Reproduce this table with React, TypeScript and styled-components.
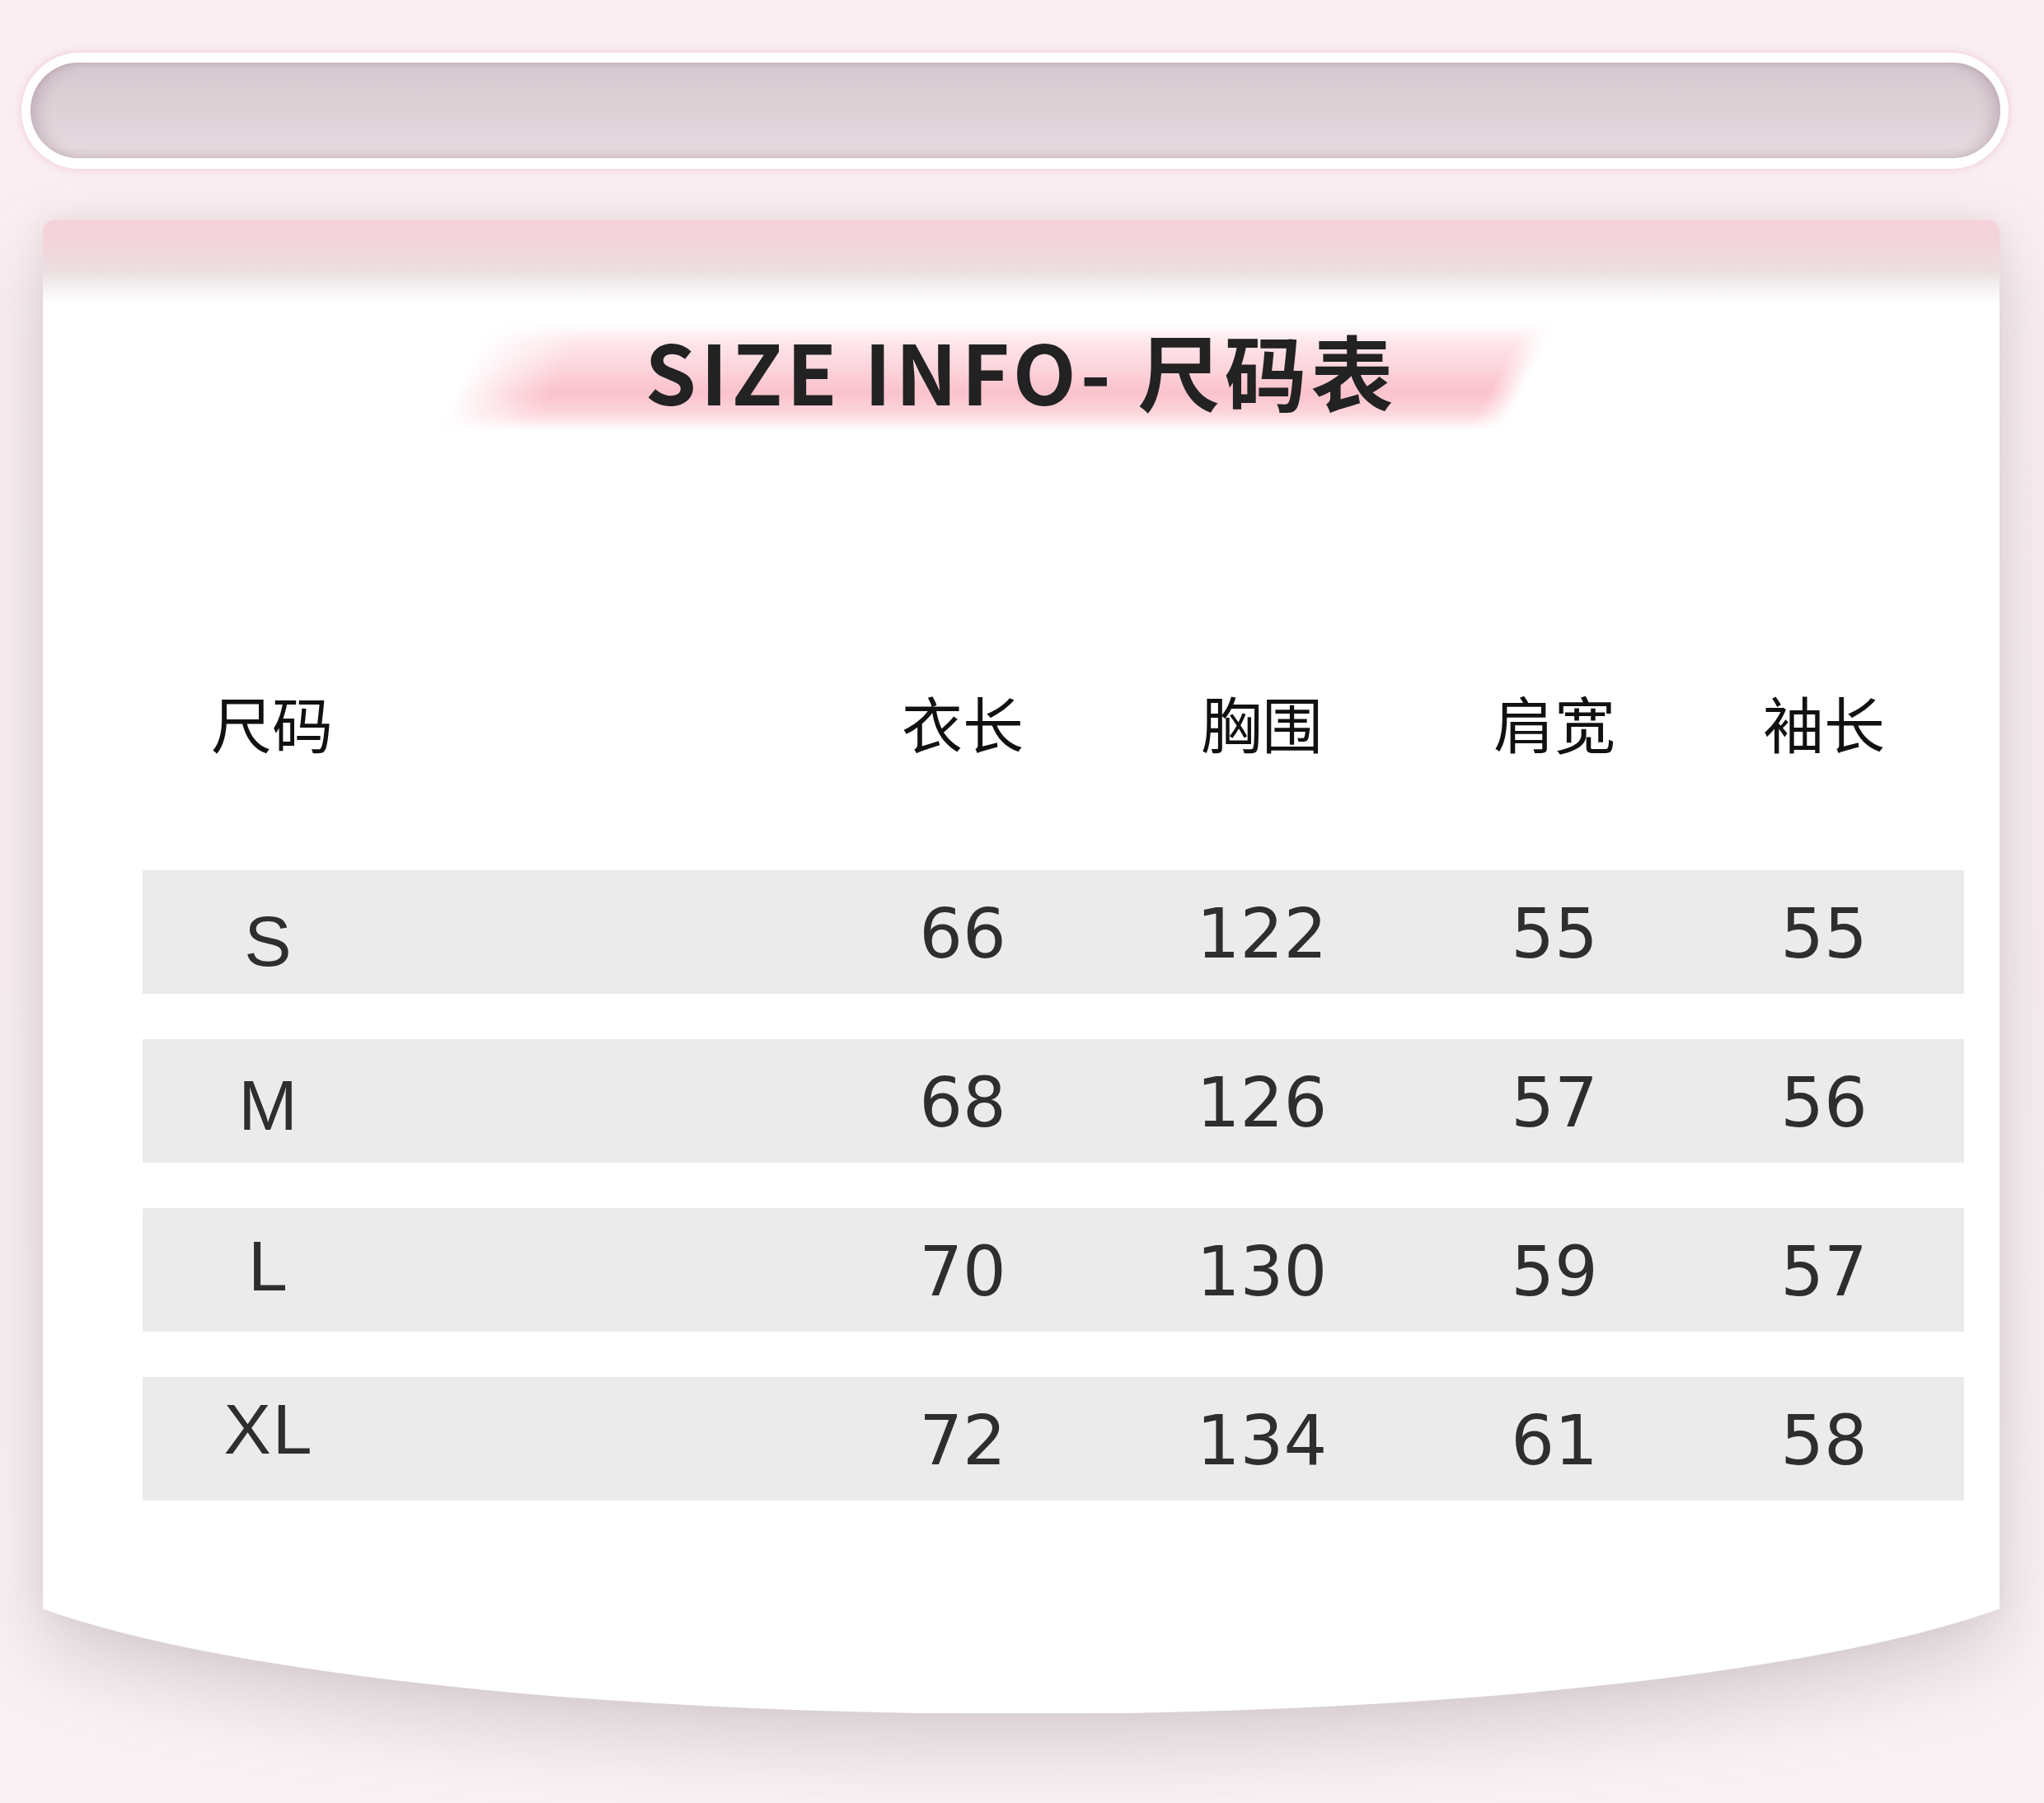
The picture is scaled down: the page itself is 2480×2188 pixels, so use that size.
import React from "react";
import styled, { createGlobalStyle } from "styled-components";

const GlobalStyle = createGlobalStyle`
  html, body {
    margin: 0;
    padding: 0;
  }
  body {
    background: #f9eef1;
    font-family: "Noto Sans CJK SC", "Noto Sans", sans-serif;
  }
`;

const Page = styled.div`
  width: 2480px;
  height: 2188px;
  overflow: hidden;
  display: flex;
  flex-direction: column;
  background: linear-gradient(180deg, #f9eef2 0%, #f8eef1 55%, #f9f1f3 100%);
`;

const TopBar = styled.div`
  margin: 64px 43px 0 26px;
  height: 141px;
  box-sizing: border-box;
  padding: 12px 10px 13px 11px;
  border-radius: 71px;
  background: #ffffff;
  box-shadow: 0 0 7px 2px rgba(242, 208, 222, 0.95);
`;

const TopBarTrack = styled.div`
  height: 100%;
  border-radius: 58px;
  background: linear-gradient(
    180deg,
    #d5c8cf 0%,
    #dacdd3 30%,
    #dfd4d9 60%,
    #e4d9de 88%,
    #dacdd3 100%
  );
  box-shadow: inset 18px 0 16px -8px rgba(165, 138, 152, 0.38),
    inset -18px 0 16px -8px rgba(165, 138, 152, 0.38),
    inset 0 3px 5px rgba(185, 165, 175, 0.35);
`;

const CardWrap = styled.div`
  margin: 62px 54px 0 52px;
  display: flex;
  flex-direction: column;
  filter: drop-shadow(0 0 16px rgba(185, 165, 172, 0.22))
    drop-shadow(0 42px 44px rgba(118, 108, 113, 0.24));
`;

const CardBody = styled.div`
  height: 1686px;
  border-radius: 14px 14px 0 0;
  background: linear-gradient(
    180deg,
    #f6d1d9 0px,
    #f1d6dc 38px,
    #ecdfe1 62px,
    #f5f1f1 82px,
    #ffffff 102px,
    #ffffff 100%
  );
  display: flex;
  flex-direction: column;
  align-items: center;
`;

const CardFoot = styled.div`
  height: 127px;
  margin-top: -1px;
  background: #ffffff;
  clip-path: ellipse(55% 219px at 50% -91px);
`;

const TitleWrap = styled.div`
  position: relative;
  margin-top: 117px;
  height: 130px;
  display: flex;
  align-items: center;
  isolation: isolate;

  &::before {
    content: "";
    position: absolute;
    left: -222px;
    right: -160px;
    top: 8px;
    bottom: -8px;
    z-index: -1;
    transform: skewX(-27deg);
    background: linear-gradient(
      180deg,
      rgba(255, 240, 243, 0) 0%,
      rgba(253, 226, 231, 0.85) 18%,
      rgba(252, 208, 216, 0.95) 45%,
      rgba(251, 193, 203, 1) 66%,
      rgba(252, 208, 215, 0.8) 86%,
      rgba(255, 240, 243, 0) 100%
    );
    filter: blur(4px);
    -webkit-mask-image: linear-gradient(90deg, transparent 0%, #000 9%, #000 97%, transparent 100%);
    mask-image: linear-gradient(90deg, transparent 0%, #000 9%, #000 97%, transparent 100%);
  }
`;

const Title = styled.h1`
  margin: 0;
  font-family: "Noto Sans CJK SC", sans-serif;
  font-weight: 700;
  font-size: 100px;
  line-height: 130px;
  letter-spacing: 5px;
  color: #222222;
  white-space: nowrap;
`;

const Table = styled.div`
  align-self: flex-start;
  width: 2210px;
  margin: 325px 0 0 121px;
  display: flex;
  flex-direction: column;
`;

const Columns = styled.div`
  display: grid;
  grid-template-columns: 830px 330px 396px 314px 340px;
  align-items: center;
`;

const HeaderRow = styled(Columns)`
  height: 74px;
  margin-bottom: 143px;
`;

const HeadCell = styled.div<{ $first?: boolean }>`
  font-family: "Noto Sans CJK SC", sans-serif;
  font-weight: 400;
  font-size: 74px;
  line-height: 74px;
  color: #111111;
  text-align: center;
  white-space: nowrap;
  ${(p) => (p.$first ? "width: 314px; justify-self: start;" : "")}
`;

const Rows = styled.div`
  display: flex;
  flex-direction: column;
  gap: 55px;
`;

const DataRow = styled(Columns)`
  height: 150px;
  background: #ebebeb;
`;

const SizeCell = styled.div<{ $shift: number }>`
  width: 306px;
  justify-self: start;
  margin-top: ${(p) => p.$shift * 2}px;
  font-family: "Liberation Sans", Arial, sans-serif;
  font-size: 86px;
  line-height: 86px;
  letter-spacing: 2px;
  color: #2e2e2e;
  text-align: center;
`;

const ValueCell = styled.div`
  padding-top: 4px;
  font-family: "DejaVu Sans", "Liberation Sans", sans-serif;
  font-size: 83px;
  line-height: 83px;
  color: #2e2e2e;
  text-align: center;
`;

const headers = ["衣长", "胸围", "肩宽", "袖长"];

const rows: { size: string; shift: number; values: number[] }[] = [
  { size: "S", shift: 11, values: [66, 122, 55, 55] },
  { size: "M", shift: 5, values: [68, 126, 57, 56] },
  { size: "L", shift: -5, values: [70, 130, 59, 57] },
  { size: "XL", shift: -12, values: [72, 134, 61, 58] },
];

export default function App() {
  return (
    <>
      <GlobalStyle />
      <Page>
        <TopBar>
          <TopBarTrack />
        </TopBar>
        <CardWrap>
          <CardBody>
            <TitleWrap>
              <Title>SIZE INFO- 尺码表</Title>
            </TitleWrap>
            <Table>
              <HeaderRow>
                <HeadCell $first>尺码</HeadCell>
                {headers.map((h) => (
                  <HeadCell key={h}>{h}</HeadCell>
                ))}
              </HeaderRow>
              <Rows>
                {rows.map((r) => (
                  <DataRow key={r.size}>
                    <SizeCell $shift={r.shift}>{r.size}</SizeCell>
                    {r.values.map((v, i) => (
                      <ValueCell key={i}>{v}</ValueCell>
                    ))}
                  </DataRow>
                ))}
              </Rows>
            </Table>
          </CardBody>
          <CardFoot />
        </CardWrap>
      </Page>
    </>
  );
}
